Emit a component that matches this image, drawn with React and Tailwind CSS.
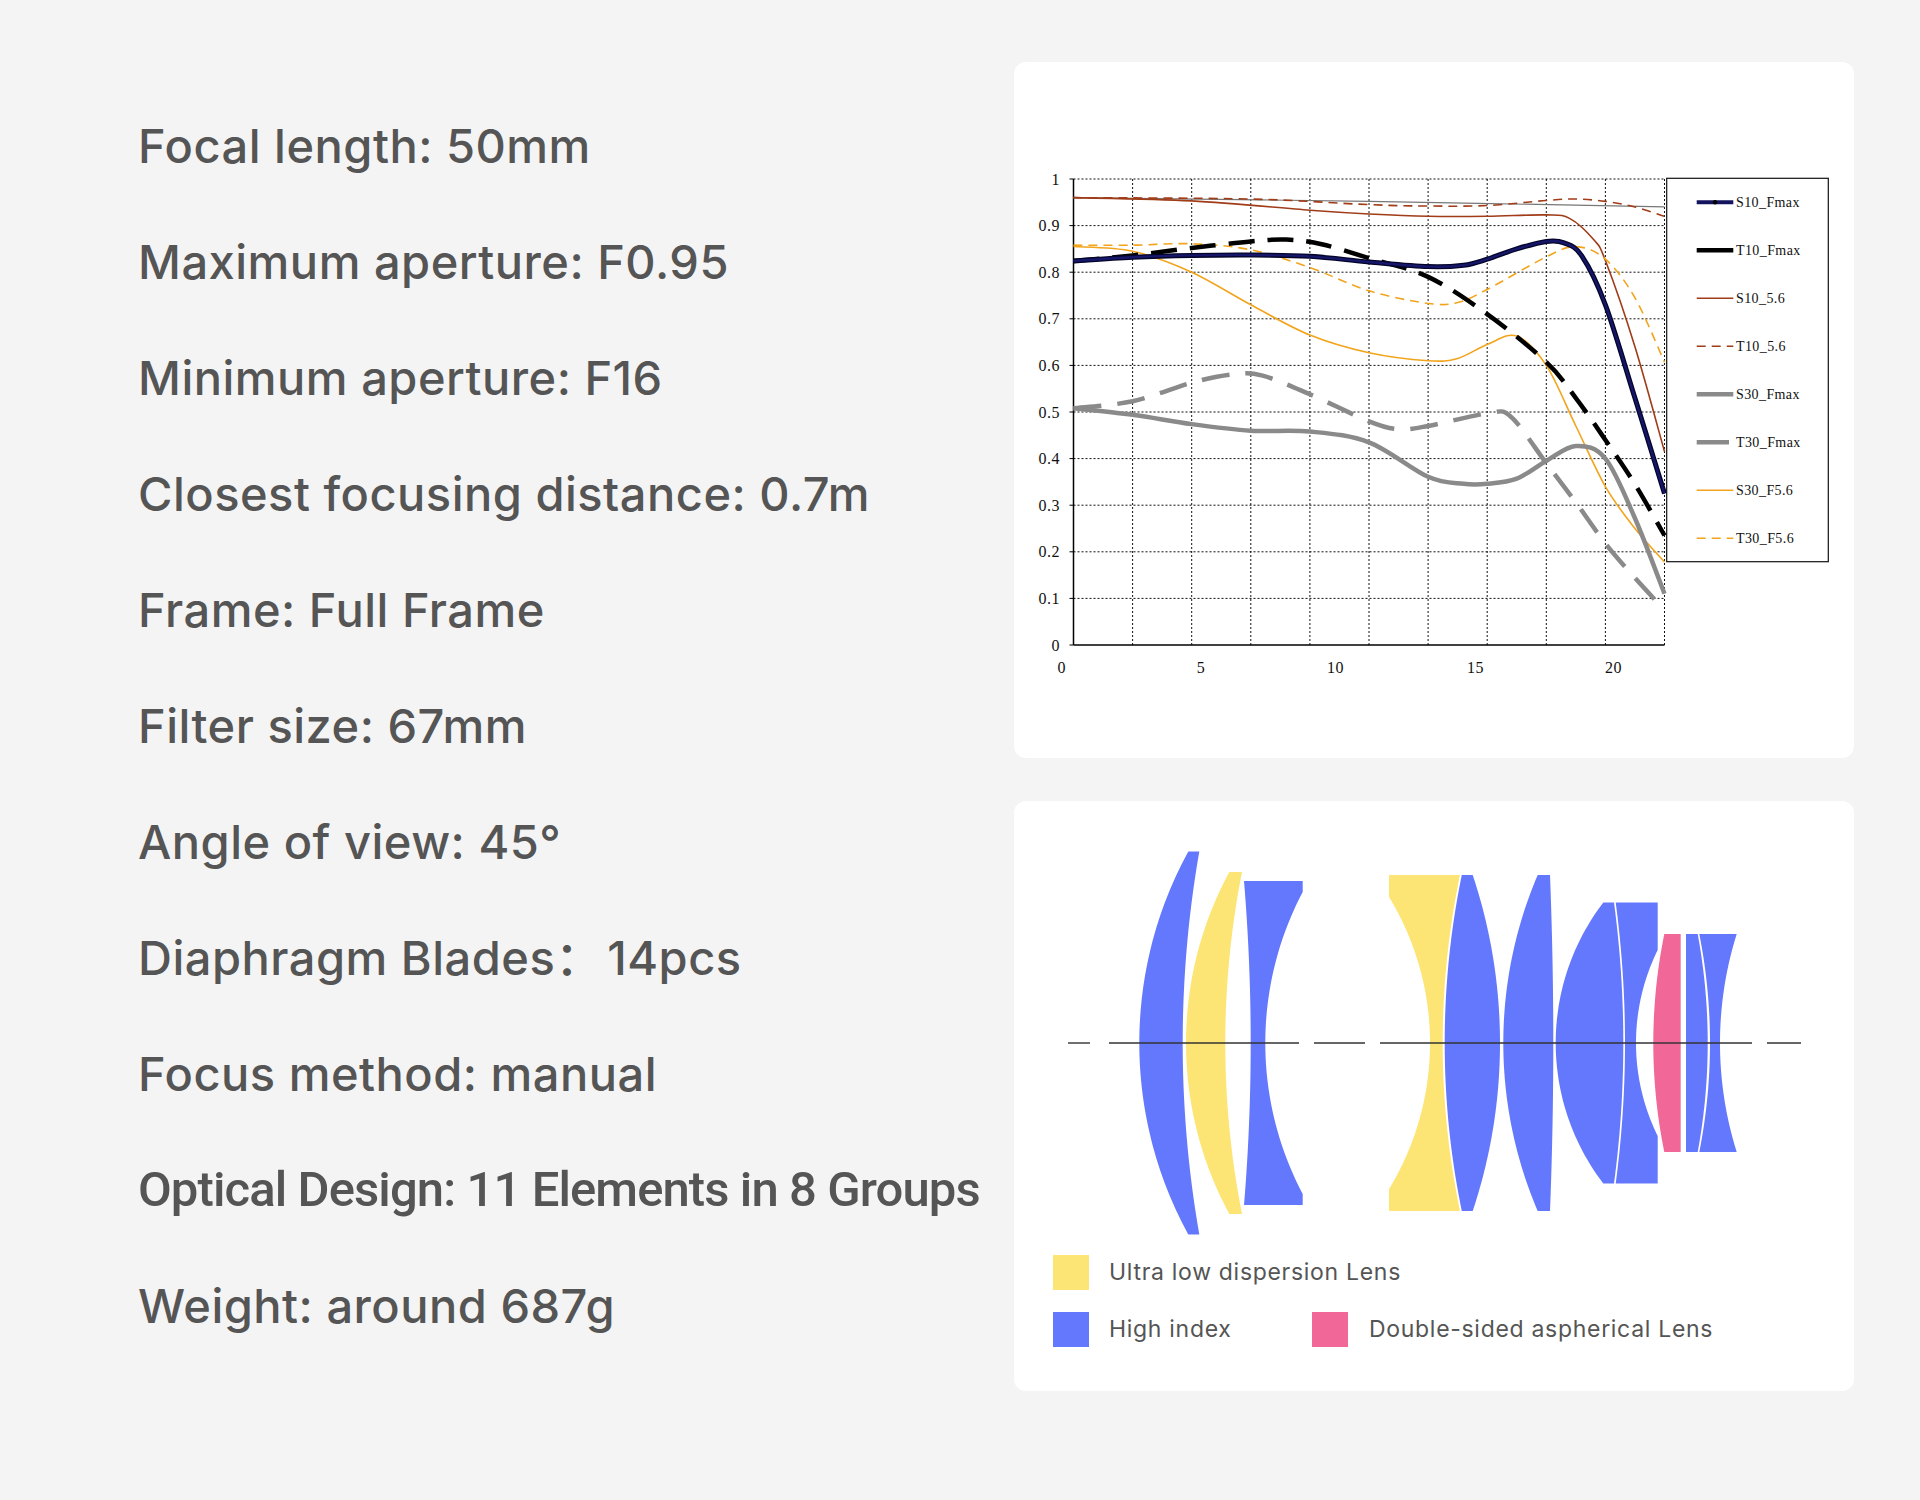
import React from "react";

const specs = [
  { t: "Focal length: 50mm" },
  { t: "Maximum aperture: F0.95" },
  { t: "Minimum aperture: F16" },
  { t: "Closest focusing distance: 0.7m" },
  { t: "Frame: Full Frame" },
  { t: "Filter size: 67mm" },
  { t: "Angle of view: 45°" },
  { t: "Diaphragm Blades", colon: true, rest: " 14pcs" },
  { t: "Focus method: manual" },
  { t: "Optical Design: 11 Elements in 8 Groups", alt: true },
  { t: "Weight: around 687g" },
];

const X = (c) => 1073.5 + c * 59.1;
const Y = (v) => 645 - v * 466;

function smooth(data) {
  const pts = data.map(([c, v]) => [X(c), Y(v)]);
  let d = `M${pts[0][0].toFixed(2)},${pts[0][1].toFixed(2)}`;
  for (let i = 0; i < pts.length - 1; i++) {
    const p0 = pts[i - 1] || pts[i];
    const p1 = pts[i];
    const p2 = pts[i + 1];
    const p3 = pts[i + 2] || p2;
    const c1x = p1[0] + (p2[0] - p0[0]) / 6;
    const c1y = p1[1] + (p2[1] - p0[1]) / 6;
    const c2x = p2[0] - (p3[0] - p1[0]) / 6;
    const c2y = p2[1] - (p3[1] - p1[1]) / 6;
    d += ` C${c1x.toFixed(2)},${c1y.toFixed(2)} ${c2x.toFixed(2)},${c2y.toFixed(2)} ${p2[0].toFixed(2)},${p2[1].toFixed(2)}`;
  }
  return d;
}

const curves = {
  grayThin: [[0, 0.96], [5, 0.952], [10, 0.94]],
  S10_56: [[0, 0.96], [2, 0.953], [4, 0.933], [5, 0.925], [6, 0.92], [7, 0.92], [8, 0.923], [8.4, 0.915], [8.8, 0.87], [9, 0.825], [9.5, 0.64], [10, 0.415]],
  T10_56: [[0, 0.96], [3, 0.957], [5, 0.945], [6, 0.942], [7, 0.943], [8, 0.954], [8.5, 0.957], [9, 0.952], [9.5, 0.94], [10, 0.92]],
  T30_56: [[0, 0.858], [1, 0.858], [2, 0.861], [3, 0.848], [4, 0.81], [5, 0.76], [6, 0.733], [6.5, 0.735], [7, 0.763], [8, 0.833], [8.5, 0.855], [9, 0.828], [9.5, 0.745], [10, 0.607]],
  S30_56: [[0, 0.855], [1, 0.845], [2, 0.8], [3, 0.73], [4, 0.665], [5, 0.627], [6, 0.61], [6.5, 0.615], [7, 0.645], [7.5, 0.663], [8, 0.6], [8.5, 0.47], [9, 0.34], [9.5, 0.25], [10, 0.178]],
  T30_F: [[0, 0.508], [1, 0.523], [2, 0.563], [2.7, 0.581], [3.2, 0.578], [4, 0.538], [5, 0.48], [5.5, 0.463], [6, 0.47], [7, 0.497], [7.4, 0.49], [8, 0.39], [8.5, 0.306], [9, 0.218], [9.5, 0.144], [10, 0.075]],
  S30_F: [[0, 0.508], [1, 0.494], [2, 0.474], [3, 0.46], [4, 0.458], [5, 0.435], [6, 0.361], [6.6, 0.346], [7, 0.346], [7.5, 0.357], [8, 0.395], [8.5, 0.427], [9, 0.4], [9.5, 0.272], [10, 0.11]],
  T10_F: [[0, 0.824], [1, 0.836], [2, 0.852], [3, 0.866], [3.6, 0.87], [4.2, 0.86], [5, 0.83], [6, 0.79], [7, 0.71], [8, 0.607], [8.5, 0.53], [9, 0.44], [9.5, 0.345], [10, 0.235]],
  S10_F: [[0, 0.824], [1, 0.832], [2, 0.836], [3, 0.837], [4, 0.834], [5, 0.822], [6, 0.812], [6.6, 0.815], [7, 0.828], [7.5, 0.85], [8, 0.866], [8.3, 0.863], [8.6, 0.835], [9, 0.73], [9.5, 0.53], [10, 0.325]],
};

const legend = [
  { n: "S10_Fmax", c: "#14145e", w: 4, dot: true },
  { n: "T10_Fmax", c: "#000", w: 4.5 },
  { n: "S10_5.6", c: "#a03c18", w: 1.6 },
  { n: "T10_5.6", c: "#a03c18", w: 1.6, dash: "9 6" },
  { n: "S30_Fmax", c: "#8a8a8a", w: 4.5 },
  { n: "T30_Fmax", c: "#8a8a8a", w: 4.5, short: true },
  { n: "S30_F5.6", c: "#f2a41c", w: 1.6 },
  { n: "T30_F5.6", c: "#f2a41c", w: 1.6, dash: "9 6" },
];

function MTFChart() {
  const yl = ["0", "0.1", "0.2", "0.3", "0.4", "0.5", "0.6", "0.7", "0.8", "0.9", "1"];
  const xl = [["0", 1061.7], ["5", 1201], ["10", 1335.6], ["15", 1475.4], ["20", 1613.4]];
  return (
    <svg width="840" height="696" viewBox="1014 62 840 696" className="block">
      {Array.from({ length: 10 }, (_, i) => (
        <line key={"v" + i} x1={X(i + 1)} y1={Y(1)} x2={X(i + 1)} y2={Y(0)} stroke="#111" strokeWidth="1" strokeDasharray="2 2" />
      ))}
      {Array.from({ length: 10 }, (_, i) => (
        <line key={"h" + i} x1={X(0)} y1={Y((i + 1) / 10)} x2={X(10)} y2={Y((i + 1) / 10)} stroke="#111" strokeWidth="1" strokeDasharray="2 2" />
      ))}
      <line x1={X(0)} y1={Y(1)} x2={X(0)} y2={Y(0)} stroke="#000" strokeWidth="1.5" />
      <line x1={X(0)} y1={Y(0)} x2={X(10)} y2={Y(0)} stroke="#000" strokeWidth="1.5" />
      {yl.map((t, i) => (
        <g key={t}>
          <line x1={X(0) - 4} y1={Y(i / 10)} x2={X(0)} y2={Y(i / 10)} stroke="#000" strokeWidth="1" />
          <text x="1060" y={Y(i / 10)} textAnchor="end" dominantBaseline="central" fontFamily="'Liberation Serif', serif" fontSize="16" fill="#111" letterSpacing="0.5">
            {t}
          </text>
        </g>
      ))}
      {xl.map(([t, x]) => (
        <text key={t} x={x} y="667" textAnchor="middle" dominantBaseline="central" fontFamily="'Liberation Serif', serif" fontSize="16" fill="#111" letterSpacing="0.5">
          {t}
        </text>
      ))}
      <path d={smooth(curves.grayThin)} fill="none" stroke="#777" strokeWidth="1.2" />
      <path d={smooth(curves.S10_56)} fill="none" stroke="#a03c18" strokeWidth="1.6" />
      <path d={smooth(curves.T10_56)} fill="none" stroke="#a03c18" strokeWidth="1.6" strokeDasharray="9 6" />
      <path d={smooth(curves.T30_56)} fill="none" stroke="#f2a41c" strokeWidth="1.6" strokeDasharray="9 6" />
      <path d={smooth(curves.S30_56)} fill="none" stroke="#f2a41c" strokeWidth="1.6" />
      <path d={smooth(curves.T30_F)} fill="none" stroke="#8a8a8a" strokeWidth="4.5" strokeDasharray="28 16" />
      <path d={smooth(curves.S30_F)} fill="none" stroke="#8a8a8a" strokeWidth="4.5" />
      <path d={smooth(curves.T10_F)} fill="none" stroke="#000" strokeWidth="4.5" strokeDasharray="26 13" />
      <path d={smooth(curves.S10_F)} fill="none" stroke="#05052a" strokeWidth="5" />
      <path d={smooth(curves.S10_F)} fill="none" stroke="#16166a" strokeWidth="2.4" />
      <rect x="1666.7" y="178.3" width="161.6" height="383.4" fill="#fff" stroke="#111" strokeWidth="1.2" />
      {legend.map((l, i) => {
        const y = 202.3 + i * 48;
        return (
          <g key={l.n}>
            <line x1="1696.7" y1={y} x2={l.short ? 1729 : 1733.3} y2={y} stroke={l.c} strokeWidth={l.w} strokeDasharray={l.dash} />
            {l.dot && <circle cx="1715" cy={y} r="2.2" fill="#000" />}
            <text x="1736" y={y} dominantBaseline="central" fontFamily="'Liberation Serif', serif" fontSize="14" fill="#111" letterSpacing="0.4">
              {l.n}
            </text>
          </g>
        );
      })}
    </svg>
  );
}

const BLUE = "#6478fd";
const YELLOW = "#fde575";
const PINK = "#f16797";
const AX = 1043;

function lensPath(h, L, R) {
  const xAt = (s, y) => {
    const hc = s.hc ?? h;
    const ay = Math.abs(y);
    if (ay >= hc) return s.e;
    const sg = s.e - s.c;
    if (Math.abs(sg) < 0.01) return s.c;
    const r = (hc * hc + sg * sg) / (2 * Math.abs(sg));
    return s.c + Math.sign(sg) * (r - Math.sqrt(r * r - y * y));
  };
  const ys = (s) => {
    const hc = s.hc ?? h;
    const arr = [-h];
    const N = 60;
    for (let i = 0; i <= N; i++) arr.push(-hc + (2 * hc * i) / N);
    arr.push(h);
    return arr;
  };
  const left = ys(L).map((y) => [xAt(L, y), AX + y]);
  const right = ys(R).reverse().map((y) => [xAt(R, y), AX + y]);
  const all = [...left, ...right];
  return "M" + all.map(([x, y]) => `${x.toFixed(2)},${y.toFixed(2)}`).join(" L") + " Z";
}

const lenses = [
  { f: BLUE, h: 191.5, L: { e: 1188.3, c: 1139.3 }, R: { e: 1199.3, c: 1182.7 } },
  { f: YELLOW, h: 171, L: { e: 1229.3, c: 1186 }, R: { e: 1242, c: 1225.3 } },
  { f: BLUE, h: 162, L: { e: 1244, c: 1250.7 }, R: { e: 1302.7, c: 1265.3, hc: 151 } },
  { f: YELLOW, h: 168, L: { e: 1389, c: 1430, hc: 146 }, R: { e: 1460, c: 1442.7 } },
  { f: BLUE, h: 168, L: { e: 1461.8, c: 1444.7 }, R: { e: 1472.7, c: 1500 } },
  { f: BLUE, h: 168, L: { e: 1537.7, c: 1503.3 }, R: { e: 1550, c: 1553.3 } },
  { f: BLUE, h: 140.5, L: { e: 1603.3, c: 1555.7 }, R: { e: 1614, c: 1623.3 } },
  { f: BLUE, h: 140.5, L: { e: 1615.7, c: 1625 }, R: { e: 1657.7, c: 1636, hc: 93 } },
  { f: PINK, h: 109, L: { e: 1664.3, c: 1653.3 }, R: { e: 1680.7, c: 1680.7 } },
  { f: BLUE, h: 109, L: { e: 1686, c: 1686 }, R: { e: 1697.7, c: 1707.7 } },
  { f: BLUE, h: 109, L: { e: 1699.3, c: 1710 }, R: { e: 1736.7, c: 1720 } },
];

const axisSegs = [[1068, 1090], [1109, 1299], [1314, 1365], [1380, 1752], [1767, 1801]];

function LensDiagram() {
  return (
    <svg width="840" height="449" viewBox="1014 801 840 449" className="block">
      {lenses.map((l, i) => (
        <path key={i} d={lensPath(l.h, l.L, l.R)} fill={l.f} />
      ))}
      {axisSegs.map(([a, b], i) => (
        <line key={i} x1={a} y1={AX} x2={b} y2={AX} stroke="#333" strokeWidth="1.4" />
      ))}
    </svg>
  );
}

export default function App() {
  return (
    <div className="w-[1920px] h-[1500px] bg-[#f4f4f4] flex pt-[62px] pl-[138px] pr-[66px]">
      <div className="flex-1 flex flex-col pt-[26px]">
        {specs.map((s) => (
          <div
            key={s.t}
            className={
              s.alt
                ? "h-[116px] leading-[116px] text-[49px] font-medium tracking-[-0.9px] text-[#555] whitespace-nowrap font-['Roboto','Noto_Sans_CJK_SC',sans-serif]"
                : "h-[116px] leading-[116px] text-[47px] font-medium tracking-[0.5px] text-[#555] whitespace-nowrap font-['Inter','Noto_Sans_CJK_SC',sans-serif]"
            }
          >
            {s.t}
            {s.colon && <span className="tracking-[-8px]">：</span>}
            {s.rest}
          </div>
        ))}
      </div>
      <div className="w-[840px] flex flex-col gap-[43px]">
        <div className="bg-white rounded-[12px] h-[696px] overflow-hidden">
          <MTFChart />
        </div>
        <div className="bg-white rounded-[12px] h-[590px] overflow-hidden flex flex-col">
          <LensDiagram />
          <div className="flex flex-col gap-[22px] pl-[39px] pt-[5px] text-[23px] tracking-[0.7px] text-[#555] font-['Inter',sans-serif]">
            <div className="flex items-center h-[35px]">
              <div className="w-[36px] h-[35px] bg-[#fde575]" />
              <span className="ml-[20px]">Ultra low dispersion Lens</span>
            </div>
            <div className="flex items-center h-[35px]">
              <div className="w-[259px] flex items-center">
                <div className="w-[36px] h-[35px] bg-[#6478fd]" />
                <span className="ml-[20px]">High index</span>
              </div>
              <div className="w-[36px] h-[35px] bg-[#f16797]" />
              <span className="ml-[21px]">Double-sided aspherical Lens</span>
            </div>
          </div>
        </div>
      </div>
    </div>
  );
}
